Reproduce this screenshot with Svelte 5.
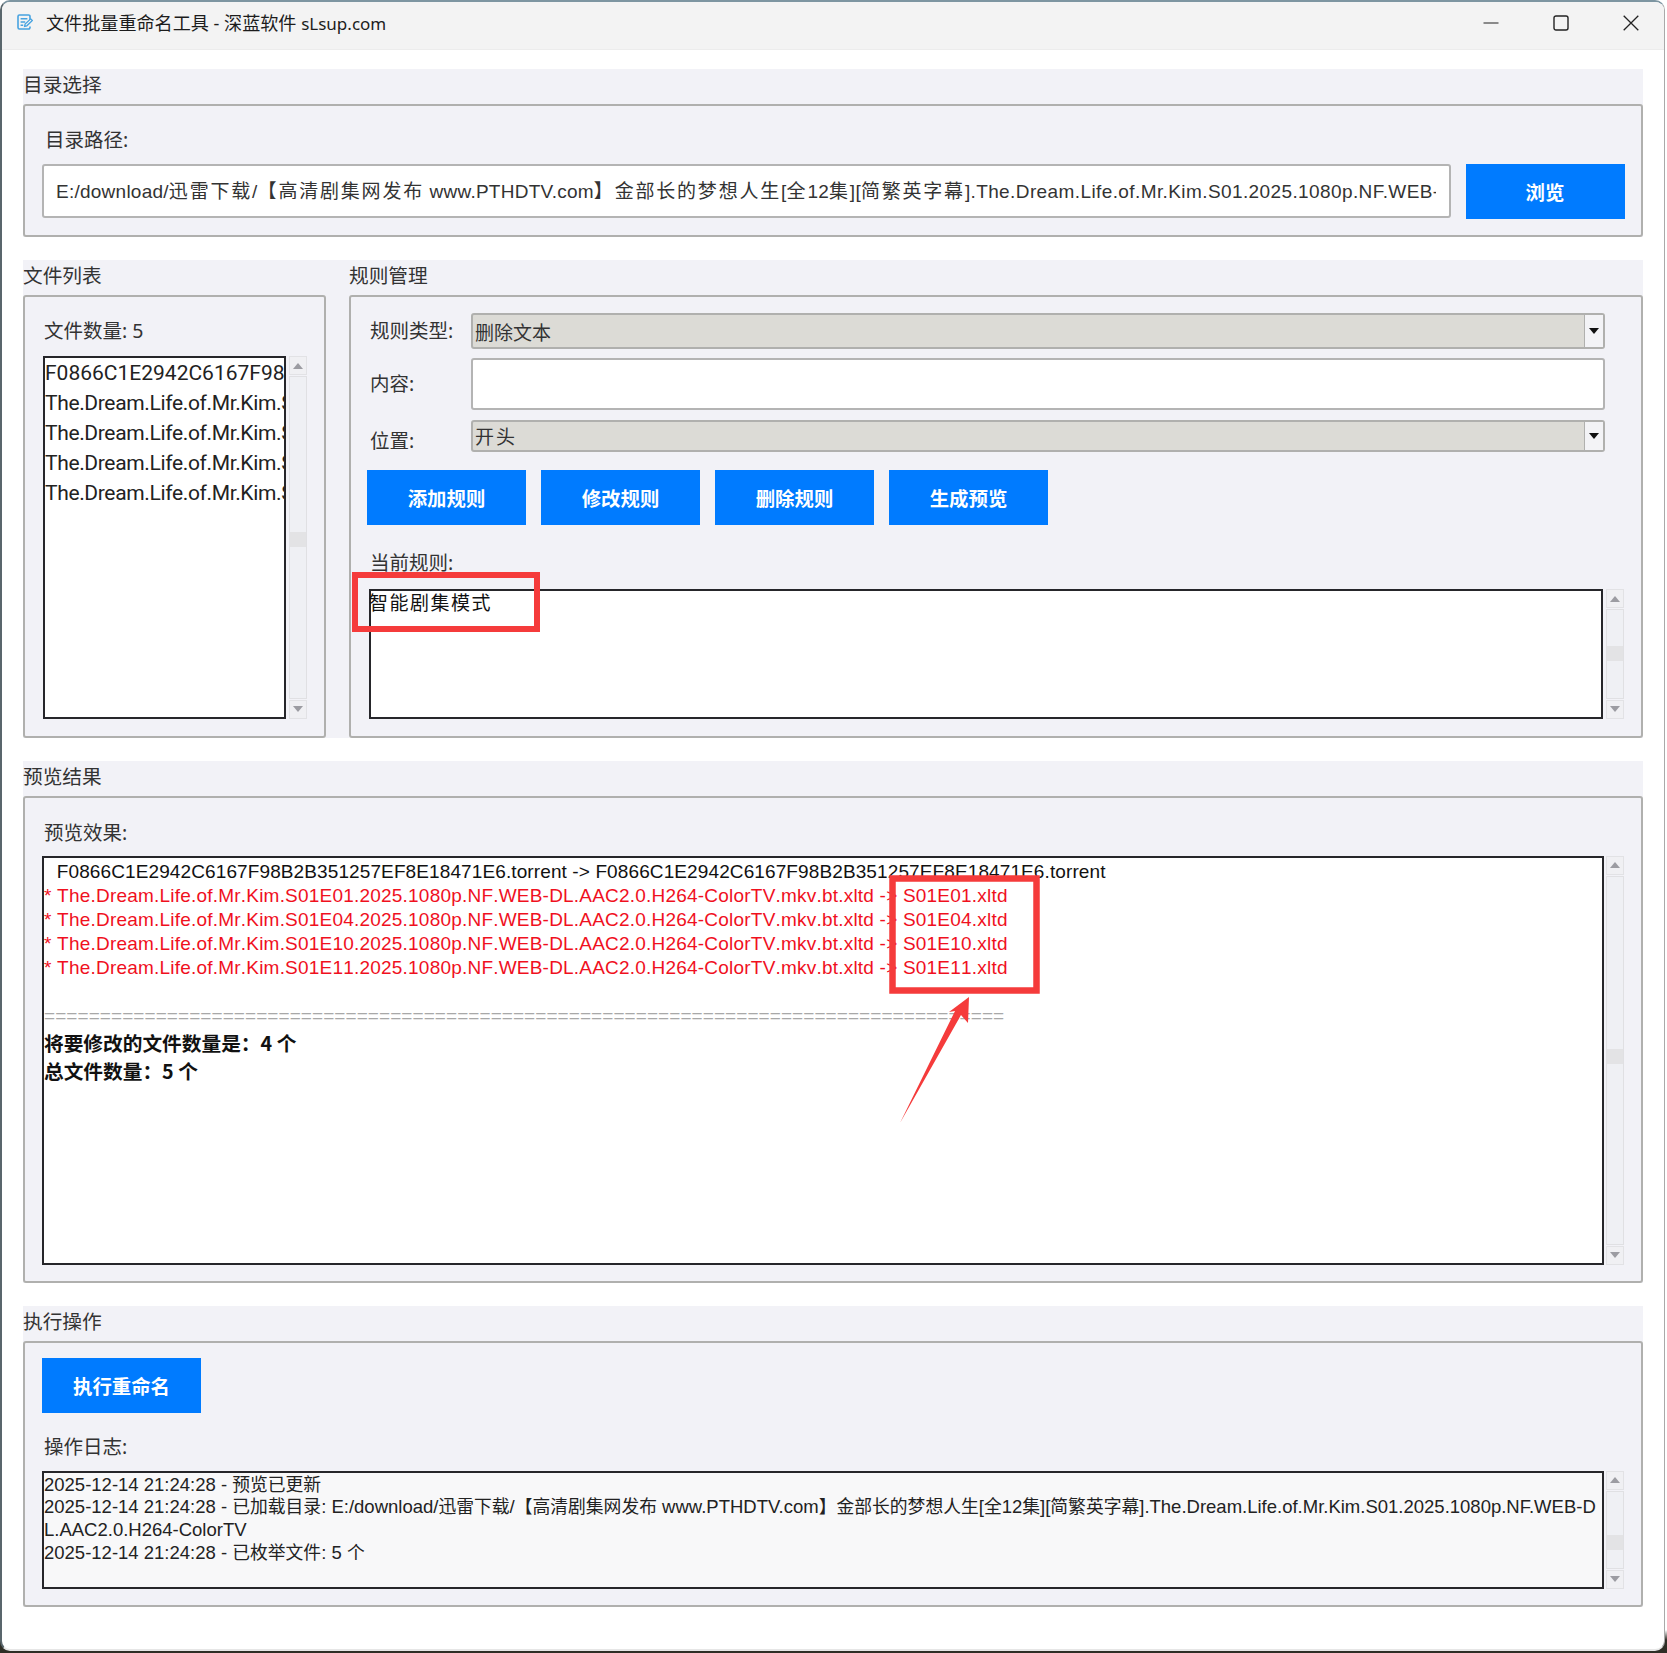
<script>
  const files = ['F0866C1E2942C6167F98B2B351257EF8E18471E6.torrent', 'The.Dream.Life.of.Mr.Kim.S01E01.2025.1080p', 'The.Dream.Life.of.Mr.Kim.S01E04.2025.1080p', 'The.Dream.Life.of.Mr.Kim.S01E10.2025.1080p', 'The.Dream.Life.of.Mr.Kim.S01E11.2025.1080p'];
  const eps = ['01', '04', '10', '11'];
  const ruleButtons = ['添加规则', '修改规则', '删除规则', '生成预览'];
  const torrent = 'F0866C1E2942C6167F98B2B351257EF8E18471E6.torrent';
</script>

{#snippet scrollbar(top, height)}
  <div class="sb">
    <div class="sb-btn"><span class="tri up"></span></div>
    <div class="sb-track"><div class="sb-thumb" style="margin-top:{top}px;height:{height}px"></div></div>
    <div class="sb-btn"><span class="tri down"></span></div>
  </div>
{/snippet}

<div class="page">
  <div class="win">
    <header class="titlebar">
      <div class="title">
        <svg class="app-icon" viewBox="0 0 16 16" fill="none" stroke="#47a3e0" stroke-width="1.6">
          <path d="M13 7V2.4A1.4 1.4 0 0 0 11.6 1H2.4A1.4 1.4 0 0 0 1 2.4v11.2A1.4 1.4 0 0 0 2.4 15h9.2a1.4 1.4 0 0 0 1.4-1.4v-1"/>
          <path d="M3.6 4.8h6.8M3.6 8h4.6M3.6 11.2h2.6" stroke-width="1.5"/>
          <path d="M7.6 12.3l.5-2.3 5.6-5.2 1.7 1.7-5.6 5.3z" stroke-width="1.3" fill="#f3f3f3"/>
        </svg>
        <span>文件批量重命名工具 - 深蓝软件 <span class="site">sLsup.com</span></span>
      </div>
      <div class="controls">
        <svg width="16" height="16" viewBox="0 0 16 16"><path d="M0.5 8h15" stroke="#222" stroke-width="1.2"/></svg>
        <svg width="16" height="16" viewBox="0 0 16 16" fill="none"><rect x="1" y="1" width="14" height="14" rx="2" stroke="#222" stroke-width="1.4"/></svg>
        <svg width="16" height="16" viewBox="0 0 16 16" fill="none"><path d="M0.7 0.7l14.6 14.6M15.3 0.7L0.7 15.3" stroke="#222" stroke-width="1.3"/></svg>
      </div>
    </header>

    <main class="content">
      <section class="sec">
        <h2>目录选择</h2>
        <div class="group g-dir">
          <div class="lab">目录路径:</div>
          <div class="dir-row">
            <div class="input path"><span class="clip">E:/download/<i>迅雷下载</i>/<i>【高清剧集网发布</i> www.PTHDTV.com<i>】金部长的梦想人生</i>[<i>全</i>12<i>集</i>][<i>简繁英字幕</i>]<b>.The.Dream.Life.of.Mr.Kim.S01.2025.1080p.NF.WEB-DL.AAC2.0.H264-ColorTV</b></span></div>
            <button class="btn">浏览</button>
          </div>
        </div>
      </section>

      <section class="sec two">
        <div class="col-left">
          <h2>文件列表</h2>
          <div class="group g-files">
            <div class="lab count">文件数量: 5</div>
            <div class="with-sb wide-gap grow">
              <div class="box list">
                {#each files as f, i}<div class="li" class:hash={i === 0}>{f}</div>{/each}
              </div>
              {@render scrollbar(155, 15)}
            </div>
          </div>
        </div>
        <div class="col-right">
          <h2>规则管理</h2>
          <div class="group g-rules">
            <div class="row r1">
              <div class="lab">规则类型:</div>
              <div class="combo"><span>删除文本</span><div class="arrow"><span class="caret"></span></div></div>
            </div>
            <div class="row r2">
              <div class="lab">内容:</div>
              <div class="input"></div>
            </div>
            <div class="row r3">
              <div class="lab low">位置:</div>
              <div class="combo"><span class="spaced">开头</span><div class="arrow"><span class="caret"></span></div></div>
            </div>
            <div class="btns">
              {#each ruleButtons as b}<button class="btn">{b}</button>{/each}
            </div>
            <div class="lab current">当前规则:</div>
            <div class="with-sb wide-gap grow">
              <div class="box rules">智能剧集模式</div>
              {@render scrollbar(36, 15)}
            </div>
          </div>
        </div>
      </section>

      <section class="sec">
        <h2>预览结果</h2>
        <div class="group g-preview">
          <div class="lab">预览效果:</div>
          <div class="with-sb">
            <div class="box preview">
              <div class="pl head">&nbsp; {torrent} -&gt; {torrent}</div>
              {#each eps as e}
                <div class="pl red">* The.Dream.Life.of.Mr.Kim.S01E{e}.2025.1080p.NF.WEB-DL.AAC2.0.H264-ColorTV.mkv.bt.xltd -&gt; S01E{e}.xltd</div>
              {/each}
              <div class="pl">&nbsp;</div>
              <div class="pl sep">{'='.repeat(86)}</div>
              <div class="pb first">将要修改的文件数量是：4 个</div>
              <div class="pb">总文件数量：5 个</div>
            </div>
            {@render scrollbar(172, 15)}
          </div>
        </div>
      </section>

      <section class="sec">
        <h2>执行操作</h2>
        <div class="group g-exec">
          <button class="btn">执行重命名</button>
          <div class="lab log-lab">操作日志:</div>
          <div class="with-sb">
            <div class="box log">
              <div>2025-12-14 21:24:28 - <i>预览已更新</i></div>
              <div>2025-12-14 21:24:28 - <i>已加载目录</i>: E:/download/<i>迅雷下载</i>/<i>【高清剧集网发布</i> www.PTHDTV.com<i>】金部长的梦想人生</i>[<i>全</i>12<i>集</i>][<i>简繁英字幕</i>].The.Dream.Life.of.Mr.Kim.S01.2025.1080p.NF.WEB-D</div>
              <div>L.AAC2.0.H264-ColorTV</div>
              <div>2025-12-14 21:24:28 - <i>已枚举文件</i>: 5 <i>个</i></div>
            </div>
            {@render scrollbar(43, 15)}
          </div>
        </div>
      </section>
    </main>
  </div>

  <svg class="marks" viewBox="0 0 1667 1653" fill="none">
    <rect x="355" y="575" width="182" height="54" stroke="#f53b3b" stroke-width="6"/>
    <rect x="892.5" y="878.5" width="144" height="112" stroke="#f53b3b" stroke-width="6.5"/>
    <polygon points="969,997 968,1023 961,1015 900,1123 955,1011 949,1012" fill="#f53b3b"/>
  </svg>
</div>

<style>
  :global(body) { margin: 0; background: #fff; }
  .page {
    position: relative;
    width: 1667px;
    height: 1653px;
    overflow: hidden;
    background: linear-gradient(to bottom, #fff 0, #fff 1630px, #2f2e26 1640px);
    font-family: "Liberation Sans", "Noto Sans CJK SC", sans-serif;
    color: #222;
  }
  .win {
    box-sizing: border-box;
    width: 1664.5px;
    height: 1651px;
    background: #fff;
    border: 2px solid #7d95a1;
    border-left-color: #59666c;
    border-right: 1px solid #a9a9a9;
    border-bottom: 2px solid #e6e6e6;
    border-radius: 10px;
    overflow: hidden;
  }
  .titlebar {
    height: 48px;
    background: #f3f3f3;
    border-bottom: 1px solid #ececec;
    box-sizing: border-box;
    display: flex;
    align-items: center;
    justify-content: space-between;
    padding: 0 25px 5px 15px;
  }
  .title { display: flex; align-items: center; gap: 13px; font: 18.1px "Noto Sans", "Noto Sans CJK SC", sans-serif; color: #1c1c1c; margin-bottom: 2px; }
  .site { font-size: 17px; }
  .app-icon { width: 16px; height: 16px; }
  .controls { display: flex; gap: 54px; align-items: center; }
  .controls svg { display: block; }

  .content { padding: 19px 21px 0 21px; display: flex; flex-direction: column; gap: 23px; }
  .sec { background: #f2f2f7; }
  .two { display: flex; gap: 23px; }
  .col-left { flex: none; width: 303px; display: flex; flex-direction: column; }
  .col-right { flex: 1 1 auto; display: flex; flex-direction: column; }
  h2 {
    margin: 0;
    height: 35px;
    font: 400 19.7px/30px "Noto Sans CJK SC", sans-serif;
    color: #333;
  }
  .group {
    box-sizing: border-box;
    background: #f2f2f7;
    border: 2px solid #b0b0ae;
    border-radius: 3px;
  }
  .lab {
    font: 400 19.5px/28px "Noto Sans", "Noto Sans CJK SC", sans-serif;
    color: #333;
    height: 28px;
    white-space: nowrap;
  }

  .g-dir { padding: 20px 16px 16px 17px; height: 133px; }
  .g-dir > .lab { margin-left: 3px; }
  .dir-row { display: flex; gap: 15px; margin-top: 10px; align-items: flex-start; }
  .input {
    box-sizing: border-box;
    flex: 1;
    min-width: 0;
    background: #fff;
    border: 2px solid #b4b4b4;
    border-radius: 3px;
    height: 52px;
  }
  .path {
    height: 54px;
    padding: 1px 13px 0 12px;
    font-size: 19px;
    color: #333;
  }
  .clip {
    display: block;
    line-height: 50px;
    white-space: nowrap;
    overflow: hidden;
    letter-spacing: 0.25px;
  }
  .clip i { font-style: normal; letter-spacing: 1.8px; }
  .clip b { font-weight: 400; letter-spacing: 0.4px; }
  .log i { font-style: normal; font-size: 17.8px; }
  .btn {
    flex: none;
    display: block;
    width: 159px;
    height: 55px;
    border: 0;
    padding: 0;
    background: #007bff;
    color: #fff;
    font: 700 19.4px "Noto Sans CJK SC", sans-serif;
  }

  .g-files { display: flex; flex-direction: column; padding: 20px 17px 17px 18px; height: 442.5px; }
  .count { margin-left: 1px; margin-bottom: 11px; flex: none; }
  .with-sb { display: flex; gap: 2px; align-items: stretch; }
  .wide-gap { gap: 3px; }
  .grow { flex: 1; min-height: 0; }
  .box {
    box-sizing: border-box;
    flex: 1;
    min-width: 0;
    background: #fff;
    border: 2px solid #26262a;
    overflow: hidden;
  }
  .li {
    font: 21px/30px Roboto, sans-serif;
    height: 30px;
    white-space: nowrap;
    color: #222;
    letter-spacing: -0.35px;
  }
  .li.hash { letter-spacing: 0; }

  .sb { width: 18px; flex: none; display: flex; flex-direction: column; gap: 1px; }
  .sb-btn {
    height: 19px;
    flex: none;
    background: #f0f0f3;
    border: 1px solid #e2e2e5;
    box-sizing: border-box;
    display: flex;
    align-items: center;
    justify-content: center;
  }
  .tri { width: 0; height: 0; border-left: 5.5px solid transparent; border-right: 5.5px solid transparent; }
  .tri.up { border-bottom: 6px solid #9c9ca2; }
  .tri.down { border-top: 6px solid #9c9ca2; }
  .sb-track { flex: 1; background: #eff0f4; border: 1px solid #e0e0e3; box-sizing: border-box; }
  .sb-thumb { background: #e3e3e5; }

  .g-rules { display: flex; flex-direction: column; padding: 16px 17px 17px 18px; height: 442.5px; }
  .row { display: flex; margin-right: 19px; margin-left: 1px; align-items: center; flex: none; }
  .row .lab { width: 101px; flex: none; }
  .r1 { height: 36px; }
  .r2 { height: 52px; margin-top: 9px; }
  .r3 { height: 32px; margin-top: 10px; }
  .low { padding-top: 10px; }
  .combo {
    box-sizing: border-box;
    flex: 1;
    height: 100%;
    display: flex;
    background: #dcdbd6;
    border: 2px solid #b0b0ae;
    border-radius: 3px;
    font: 400 19px "Noto Sans CJK SC", sans-serif;
    color: #333;
    align-items: center;
    padding-left: 2px;
    justify-content: space-between;
  }
  .spaced { letter-spacing: 2px; padding-bottom: 2px; }
  .arrow {
    box-sizing: border-box;
    width: 19px;
    height: 100%;
    background: #f3f3f6;
    border-left: 1px solid #b0b0ae;
    display: flex;
    align-items: center;
    justify-content: center;
  }
  .caret { width: 0; height: 0; border-left: 5px solid transparent; border-right: 5px solid transparent; border-top: 6px solid #111; }
  .btns { display: flex; gap: 15px; margin: 18px 0 0 -2px; flex: none; }
  .current { margin: 24px 0 12px 1px; flex: none; }
  .rules {
    font: 400 19px/22px "Noto Sans CJK SC", sans-serif;
    letter-spacing: 1.5px;
    color: #111;
    overflow: visible;
    text-indent: -2px;
  }

  .g-preview { padding: 21px 17px 16px 17px; height: 487px; }
  .g-preview > .lab { margin: 0 0 9px 2px; }
  .g-preview .with-sb { height: 409px; }
  .preview { padding-top: 2px; font-size: 19px; line-height: 24px; font-kerning: none; }
  .pl { white-space: pre; height: 24px; color: #111; }
  .head { letter-spacing: 0.11px; padding-left: 2px; }
  .red { color: #f0101e; letter-spacing: 0.21px; }
  .sep { color: #a8a8a8; letter-spacing: 0.07px; }
  .pb { font: 700 19.7px/28px "Noto Sans CJK SC", sans-serif; height: 28px; color: #111; }
  .first { margin-top: 1px; }

  .g-exec { padding: 15px 17px 16px 17px; height: 266px; }
  .log-lab { margin: 20px 0 10px 2px; }
  .g-exec .with-sb { height: 118px; }
  .log {
    background: #f8f8f9;
    padding-top: 1px;
    font-size: 18.5px;
    line-height: 22.7px;
    color: #222;
  }
  .log div { white-space: pre; height: 22.7px; }

  .marks { position: absolute; inset: 0; width: 1667px; height: 1653px; pointer-events: none; }
</style>
